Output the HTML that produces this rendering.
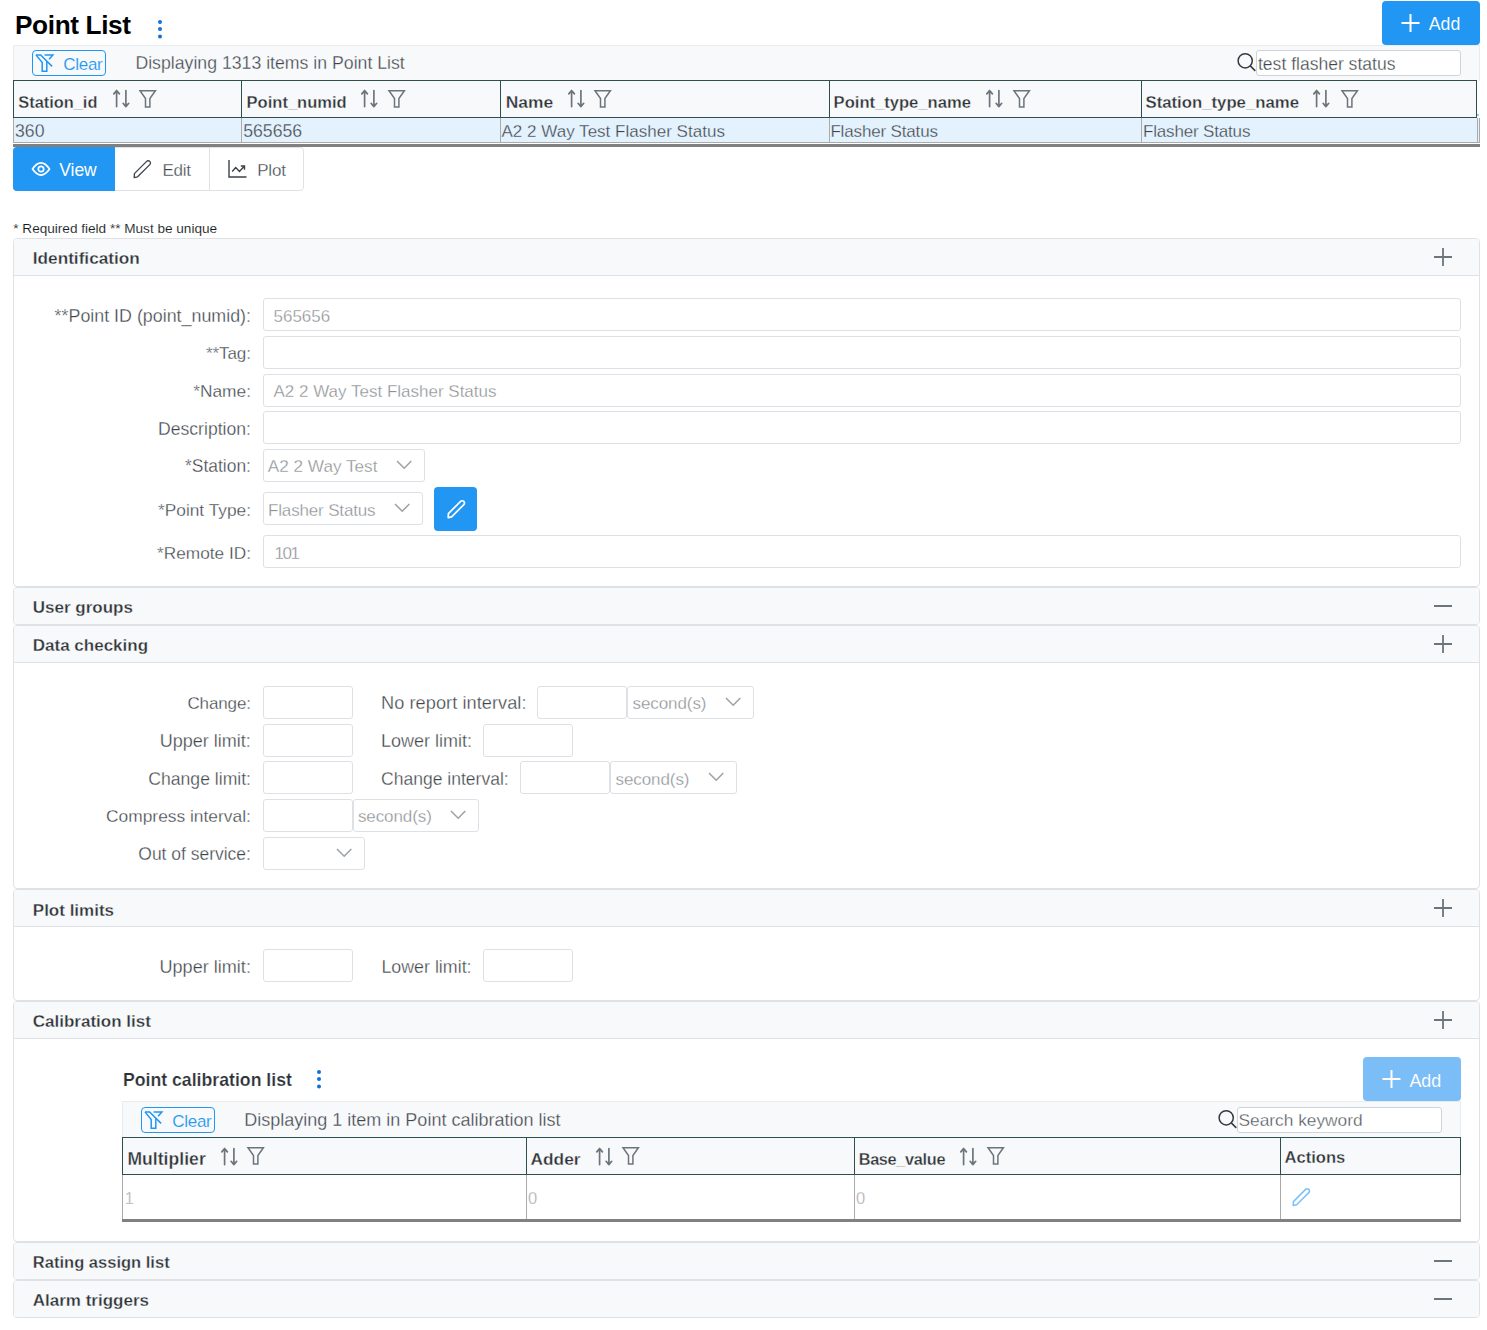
<!DOCTYPE html>
<html><head><meta charset="utf-8">
<style>
*{box-sizing:border-box;}
html,body{margin:0;padding:0;}
body{width:1487px;height:1330px;position:relative;overflow:hidden;background:#fff;font-family:"Liberation Sans",sans-serif;color:#495057;}
.a{position:absolute;}
.t{position:absolute;white-space:pre;line-height:20px;}
svg{position:absolute;overflow:visible;}
</style></head>
<body>
<div class="t" style="left:15.00px;top:15.00px;font-size:26.20px;color:#000;font-weight:bold;letter-spacing:-0.371px;">Point List</div>
<svg style="left:156px;top:18px" width="8" height="22" viewBox="0 0 8 22"><circle cx="4" cy="4" r="2" fill="#1570d6"/><circle cx="4" cy="11" r="2" fill="#1570d6"/><circle cx="4" cy="18.4" r="2" fill="#1570d6"/></svg>
<div class="a" style="left:1382px;top:1px;width:98px;height:44px;background:#2196f3;border-radius:4px;"></div>
<svg style="left:1400px;top:13px" width="20" height="20" viewBox="0 0 20 20"><path d="M10.5 1V19M1.5 10H19.5" stroke="#fff" stroke-width="2"/></svg>
<div class="t" style="left:1428.70px;top:14.00px;font-size:17.76px;color:#fff;-webkit-text-stroke:0.1px #2196f3;">Add</div>
<div class="a" style="left:13px;top:45px;width:1467px;height:36px;background:#f8f9fa;border:1px solid #e9ecef;border-bottom:none;"></div>
<div class="a" style="left:32px;top:50px;width:74px;height:26px;border:1px solid #2196f3;border-radius:4px;"></div>
<svg style="left:33px;top:51px" width="24" height="24" viewBox="0 0 24 24"><g fill="none" stroke="#2196f3" stroke-width="1.5" stroke-linejoin="miter"><path d="M3 3.9H7.6L19.1 15.4"/><path d="M3 3.9L9.2 11.6V20.2H13.8V10.6"/><path d="M11.6 3.9H19.9L16.1 8.3"/></g></svg>
<div class="t" style="left:63.20px;top:54.50px;font-size:17.00px;color:#2196f3;letter-spacing:-0.258px;-webkit-text-stroke:0.15px #f8f9fa;">Clear</div>
<div class="t" style="left:135.40px;top:53.00px;font-size:17.70px;color:#3c4349;-webkit-text-stroke:0.3px #f8f9fa;">Displaying 1313 items in Point List</div>
<svg style="left:1236px;top:52px" width="22" height="22" viewBox="0 0 22 22"><circle cx="9.2" cy="8.8" r="7.1" fill="none" stroke="#343a40" stroke-width="1.5"/><path d="M14.3 13.9L19.3 18.9" stroke="#343a40" stroke-width="1.5"/></svg>
<div class="a" style="left:1256px;top:50px;width:205px;height:26px;background:#fff;border:1px solid #ced4da;border-radius:3px;"></div>
<div class="t" style="left:1258.00px;top:54.00px;font-size:17.54px;color:#3c4349;-webkit-text-stroke:0.3px #fff;">test flasher status</div>
<div class="a" style="left:13px;top:80px;width:1464px;height:38px;background:#f8f9fa;border:1px solid #2f4f4f;"></div>
<div class="a" style="left:241px;top:80px;width:1px;height:38px;background:#2f4f4f;"></div>
<div class="a" style="left:500px;top:80px;width:1px;height:38px;background:#2f4f4f;"></div>
<div class="a" style="left:829px;top:80px;width:1px;height:38px;background:#2f4f4f;"></div>
<div class="a" style="left:1141px;top:80px;width:1px;height:38px;background:#2f4f4f;"></div>
<div class="a" style="left:13px;top:118px;width:1467px;height:25px;background:#e3f2fd;border:1px solid #aaa;border-top:none;"></div>
<div class="a" style="left:1477px;top:114px;width:2px;height:2px;background:#90caf9;"></div>
<div class="a" style="left:241px;top:118px;width:1px;height:25px;background:#aaa;"></div>
<div class="a" style="left:500px;top:118px;width:1px;height:25px;background:#aaa;"></div>
<div class="a" style="left:829px;top:118px;width:1px;height:25px;background:#aaa;"></div>
<div class="a" style="left:1141px;top:118px;width:1px;height:25px;background:#aaa;"></div>
<div class="a" style="left:1477px;top:118px;width:1px;height:25px;background:#aaa;"></div>
<div class="a" style="left:13px;top:144px;width:1467px;height:3px;background:#808080;"></div>
<div class="t" style="left:18.30px;top:92.00px;font-size:16.36px;color:#2d3237;font-weight:bold;-webkit-text-stroke:0.3px #f8f9fa;">Station_id</div>
<svg style="left:112.9px;top:89.3px" width="18" height="20" viewBox="0 0 18 20"><g fill="none" stroke="#6c757d" stroke-width="1.7" stroke-linecap="round" stroke-linejoin="round"><path d="M3.6 1.6V17.6M0.8 4.9L3.6 1.6L6.4 4.9"/><path d="M12.9 1.6V17.6M10.1 14.3L12.9 17.6L15.7 14.3"/></g></svg>
<svg style="left:139.3px;top:89px" width="18" height="20" viewBox="0 0 18 20"><path d="M1 1.8H16.4L10.9 9.6V18.1H6.5V9.6Z" fill="none" stroke="#6c757d" stroke-width="1.5" stroke-linejoin="miter"/></svg>
<div class="t" style="left:246.60px;top:92.50px;font-size:16.55px;color:#2d3237;font-weight:bold;-webkit-text-stroke:0.3px #f8f9fa;">Point_numid</div>
<svg style="left:361.4px;top:89.3px" width="18" height="20" viewBox="0 0 18 20"><g fill="none" stroke="#6c757d" stroke-width="1.7" stroke-linecap="round" stroke-linejoin="round"><path d="M3.6 1.6V17.6M0.8 4.9L3.6 1.6L6.4 4.9"/><path d="M12.9 1.6V17.6M10.1 14.3L12.9 17.6L15.7 14.3"/></g></svg>
<svg style="left:388.1px;top:89px" width="18" height="20" viewBox="0 0 18 20"><path d="M1 1.8H16.4L10.9 9.6V18.1H6.5V9.6Z" fill="none" stroke="#6c757d" stroke-width="1.5" stroke-linejoin="miter"/></svg>
<div class="t" style="left:505.80px;top:92.00px;font-size:17.40px;color:#2d3237;font-weight:bold;-webkit-text-stroke:0.3px #f8f9fa;">Name</div>
<svg style="left:567.7px;top:89.3px" width="18" height="20" viewBox="0 0 18 20"><g fill="none" stroke="#6c757d" stroke-width="1.7" stroke-linecap="round" stroke-linejoin="round"><path d="M3.6 1.6V17.6M0.8 4.9L3.6 1.6L6.4 4.9"/><path d="M12.9 1.6V17.6M10.1 14.3L12.9 17.6L15.7 14.3"/></g></svg>
<svg style="left:594.4px;top:89px" width="18" height="20" viewBox="0 0 18 20"><path d="M1 1.8H16.4L10.9 9.6V18.1H6.5V9.6Z" fill="none" stroke="#6c757d" stroke-width="1.5" stroke-linejoin="miter"/></svg>
<div class="t" style="left:833.60px;top:92.50px;font-size:16.59px;color:#2d3237;font-weight:bold;-webkit-text-stroke:0.3px #f8f9fa;">Point_type_name</div>
<svg style="left:986px;top:89.3px" width="18" height="20" viewBox="0 0 18 20"><g fill="none" stroke="#6c757d" stroke-width="1.7" stroke-linecap="round" stroke-linejoin="round"><path d="M3.6 1.6V17.6M0.8 4.9L3.6 1.6L6.4 4.9"/><path d="M12.9 1.6V17.6M10.1 14.3L12.9 17.6L15.7 14.3"/></g></svg>
<svg style="left:1012.8px;top:89px" width="18" height="20" viewBox="0 0 18 20"><path d="M1 1.8H16.4L10.9 9.6V18.1H6.5V9.6Z" fill="none" stroke="#6c757d" stroke-width="1.5" stroke-linejoin="miter"/></svg>
<div class="t" style="left:1145.50px;top:92.50px;font-size:16.74px;color:#2d3237;font-weight:bold;-webkit-text-stroke:0.3px #f8f9fa;">Station_type_name</div>
<svg style="left:1313.4px;top:89.3px" width="18" height="20" viewBox="0 0 18 20"><g fill="none" stroke="#6c757d" stroke-width="1.7" stroke-linecap="round" stroke-linejoin="round"><path d="M3.6 1.6V17.6M0.8 4.9L3.6 1.6L6.4 4.9"/><path d="M12.9 1.6V17.6M10.1 14.3L12.9 17.6L15.7 14.3"/></g></svg>
<svg style="left:1340.6px;top:89px" width="18" height="20" viewBox="0 0 18 20"><path d="M1 1.8H16.4L10.9 9.6V18.1H6.5V9.6Z" fill="none" stroke="#6c757d" stroke-width="1.5" stroke-linejoin="miter"/></svg>
<div class="t" style="left:15.00px;top:121.00px;font-size:17.70px;color:#3c4349;-webkit-text-stroke:0.3px #e3f2fd;">360</div>
<div class="t" style="left:243.20px;top:121.00px;font-size:17.70px;color:#3c4349;-webkit-text-stroke:0.3px #e3f2fd;">565656</div>
<div class="t" style="left:501.50px;top:121.50px;font-size:17.04px;color:#3c4349;-webkit-text-stroke:0.3px #e3f2fd;">A2 2 Way Test Flasher Status</div>
<div class="t" style="left:830.40px;top:121.50px;font-size:17.00px;color:#3c4349;letter-spacing:-0.154px;-webkit-text-stroke:0.3px #e3f2fd;">Flasher Status</div>
<div class="t" style="left:1143.00px;top:121.50px;font-size:17.00px;color:#3c4349;letter-spacing:-0.169px;-webkit-text-stroke:0.3px #e3f2fd;">Flasher Status</div>
<div class="a" style="left:13px;top:147px;width:291px;height:44px;border:1px solid #dee2e6;border-radius:4px;"></div>
<div class="a" style="left:13px;top:147px;width:102px;height:44px;background:#2196f3;border-radius:4px 0 0 4px;"></div>
<div class="a" style="left:209px;top:147px;width:1px;height:44px;background:#dee2e6;"></div>
<svg style="left:31px;top:161px" width="21" height="16" viewBox="0 0 21 16"><path d="M1.5 8C4.5 3.6 7 1.9 10 1.9S15.5 3.6 18.5 8C15.5 12.4 13 14.1 10 14.1S4.5 12.4 1.5 8Z" fill="none" stroke="#fff" stroke-width="1.7"/><circle cx="10" cy="8" r="2.7" fill="none" stroke="#fff" stroke-width="1.7"/></svg>
<div class="t" style="left:59.20px;top:160.00px;font-size:17.47px;color:#fff;">View</div>
<svg style="left:133px;top:159px" width="20" height="20" viewBox="0 0 20 20"><path d="M1.2 18.6L1.4 14.6L13.6 2.4C14.5 1.5 15.9 1.5 16.8 2.4C17.7 3.3 17.7 4.7 16.8 5.6L4.6 17.8Z" fill="none" stroke="#3c4349" stroke-width="1.3" stroke-linejoin="round"/></svg>
<div class="t" style="left:162.40px;top:160.50px;font-size:17.00px;color:#3c4349;letter-spacing:-0.264px;-webkit-text-stroke:0.3px #fff;">Edit</div>
<svg style="left:227px;top:159px" width="21" height="20" viewBox="0 0 21 20"><path d="M2 1V18H19.5" fill="none" stroke="#3c4349" stroke-width="1.4"/><path d="M5.2 12.5L8.7 8.5L12.5 12.4L17.2 7.2M13.8 7H17.5V10.7" fill="none" stroke="#3c4349" stroke-width="1.4"/></svg>
<div class="t" style="left:257.20px;top:160.50px;font-size:17.00px;color:#3c4349;letter-spacing:-0.164px;-webkit-text-stroke:0.3px #fff;">Plot</div>
<div class="t" style="left:13.30px;top:218.50px;font-size:13.59px;color:#16191c;-webkit-text-stroke:0.1px #fff;">* Required field ** Must be unique</div>
<div class="a" style="left:13px;top:238px;width:1467px;height:349px;border:1px solid #dee2e6;border-radius:4px;background:#fff;"></div>
<div class="a" style="left:14px;top:239px;width:1465px;height:36px;background:#f8f9fa;border-radius:3px 3px 0 0;"></div>
<div class="a" style="left:13px;top:275px;width:1467px;height:1px;background:#dee2e6;"></div>
<div class="t" style="left:32.80px;top:248.00px;font-size:17.21px;color:#2d3237;font-weight:bold;-webkit-text-stroke:0.3px #f8f9fa;">Identification</div>
<svg style="left:1433px;top:247px" width="20" height="20" viewBox="0 0 20 20"><path d="M1 10H19M10 1V19" stroke="#6c757d" stroke-width="1.8"/></svg>
<div class="t" style="left:54.60px;top:306.00px;font-size:17.85px;color:#3c4349;-webkit-text-stroke:0.3px #fff;">**Point ID (point_numid):</div>
<div class="a" style="left:263px;top:298px;width:1198px;height:33px;border:1px solid #dde1e5;border-radius:3px;background:#fff;"></div>
<div class="t" style="left:273.50px;top:306.50px;font-size:17.00px;color:#8c9094;letter-spacing:-0.006px;-webkit-text-stroke:0.3px #fff;">565656</div>
<div class="t" style="left:205.90px;top:343.50px;font-size:17.00px;color:#3c4349;letter-spacing:-0.051px;-webkit-text-stroke:0.3px #fff;">**Tag:</div>
<div class="a" style="left:263px;top:336px;width:1198px;height:33px;border:1px solid #dde1e5;border-radius:3px;background:#fff;"></div>
<div class="t" style="left:193.20px;top:381.00px;font-size:17.34px;color:#3c4349;-webkit-text-stroke:0.3px #fff;">*Name:</div>
<div class="a" style="left:263px;top:374px;width:1198px;height:33px;border:1px solid #dde1e5;border-radius:3px;background:#fff;"></div>
<div class="t" style="left:273.50px;top:381.50px;font-size:17.00px;color:#8c9094;-webkit-text-stroke:0.3px #fff;">A2 2 Way Test Flasher Status</div>
<div class="t" style="left:158.00px;top:419.00px;font-size:17.61px;color:#3c4349;-webkit-text-stroke:0.3px #fff;">Description:</div>
<div class="a" style="left:263px;top:411px;width:1198px;height:33px;border:1px solid #dde1e5;border-radius:3px;background:#fff;"></div>
<div class="t" style="left:185.10px;top:456.00px;font-size:17.43px;color:#3c4349;-webkit-text-stroke:0.3px #fff;">*Station:</div>
<div class="a" style="left:263px;top:449px;width:162px;height:33px;border:1px solid #dde1e5;border-radius:3px;background:#fff;"></div>
<div class="t" style="left:267.80px;top:456.00px;font-size:17.16px;color:#8c9094;-webkit-text-stroke:0.3px #fff;">A2 2 Way Test</div>
<svg style="left:395.5px;top:460.1px" width="17" height="10" viewBox="0 0 17 10"><path d="M1 1L8.2 8.2L15.3 1" fill="none" stroke="#9ba1a6" stroke-width="1.5"/></svg>
<div class="t" style="left:158.00px;top:500.00px;font-size:17.31px;color:#3c4349;-webkit-text-stroke:0.3px #fff;">*Point Type:</div>
<div class="a" style="left:263px;top:492px;width:160px;height:33px;border:1px solid #dde1e5;border-radius:3px;background:#fff;"></div>
<div class="t" style="left:268.00px;top:500.50px;font-size:17.00px;color:#8c9094;letter-spacing:-0.154px;-webkit-text-stroke:0.3px #fff;">Flasher Status</div>
<svg style="left:393.5px;top:503.1px" width="17" height="10" viewBox="0 0 17 10"><path d="M1 1L8.2 8.2L15.3 1" fill="none" stroke="#9ba1a6" stroke-width="1.5"/></svg>
<div class="a" style="left:434px;top:487px;width:43px;height:44px;background:#2196f3;border-radius:4px;"></div>
<svg style="left:446.5px;top:499px" width="20" height="20" viewBox="0 0 20 20"><path d="M1.2 18.6L1.4 14.6L13.6 2.4C14.5 1.5 15.9 1.5 16.8 2.4C17.7 3.3 17.7 4.7 16.8 5.6L4.6 17.8Z" fill="none" stroke="#fff" stroke-width="1.7" stroke-linejoin="round"/></svg>
<div class="t" style="left:157.10px;top:543.00px;font-size:17.24px;color:#3c4349;-webkit-text-stroke:0.3px #fff;">*Remote ID:</div>
<div class="a" style="left:263px;top:535px;width:1198px;height:33px;border:1px solid #dde1e5;border-radius:3px;background:#fff;"></div>
<div class="t" style="left:274.40px;top:543.50px;font-size:17.00px;color:#8c9094;letter-spacing:-1.378px;-webkit-text-stroke:0.3px #fff;">101</div>
<div class="a" style="left:13px;top:587px;width:1467px;height:38px;border:1px solid #dee2e6;border-radius:4px;background:#fff;"></div>
<div class="a" style="left:14px;top:588px;width:1465px;height:36px;background:#f8f9fa;border-radius:3px;"></div>
<div class="t" style="left:32.80px;top:597.50px;font-size:17.00px;color:#2d3237;font-weight:bold;-webkit-text-stroke:0.3px #f8f9fa;">User groups</div>
<svg style="left:1433px;top:596px" width="20" height="20" viewBox="0 0 20 20"><path d="M1 10H19" stroke="#6c757d" stroke-width="2"/></svg>
<div class="a" style="left:13px;top:625px;width:1467px;height:264px;border:1px solid #dee2e6;border-radius:4px;background:#fff;"></div>
<div class="a" style="left:14px;top:626px;width:1465px;height:36px;background:#f8f9fa;border-radius:3px 3px 0 0;"></div>
<div class="a" style="left:13px;top:662px;width:1467px;height:1px;background:#dee2e6;"></div>
<div class="t" style="left:32.80px;top:635.50px;font-size:17.00px;color:#2d3237;font-weight:bold;-webkit-text-stroke:0.3px #f8f9fa;">Data checking</div>
<svg style="left:1433px;top:634px" width="20" height="20" viewBox="0 0 20 20"><path d="M1 10H19M10 1V19" stroke="#6c757d" stroke-width="1.8"/></svg>
<div class="t" style="left:187.40px;top:693.50px;font-size:17.00px;color:#3c4349;letter-spacing:-0.113px;-webkit-text-stroke:0.3px #fff;">Change:</div>
<div class="t" style="left:159.70px;top:731.00px;font-size:18.05px;color:#3c4349;-webkit-text-stroke:0.3px #fff;">Upper limit:</div>
<div class="t" style="left:148.30px;top:769.00px;font-size:17.60px;color:#3c4349;-webkit-text-stroke:0.3px #fff;">Change limit:</div>
<div class="t" style="left:106.00px;top:806.00px;font-size:17.39px;color:#3c4349;-webkit-text-stroke:0.3px #fff;">Compress interval:</div>
<div class="t" style="left:138.30px;top:844.00px;font-size:17.48px;color:#3c4349;-webkit-text-stroke:0.3px #fff;">Out of service:</div>
<div class="a" style="left:263px;top:686px;width:90px;height:33px;border:1px solid #dde1e5;border-radius:3px;background:#fff;"></div>
<div class="a" style="left:263px;top:724px;width:90px;height:33px;border:1px solid #dde1e5;border-radius:3px;background:#fff;"></div>
<div class="a" style="left:263px;top:761px;width:90px;height:33px;border:1px solid #dde1e5;border-radius:3px;background:#fff;"></div>
<div class="a" style="left:263px;top:799px;width:90px;height:33px;border:1px solid #dde1e5;border-radius:3px;background:#fff;"></div>
<div class="a" style="left:263px;top:837px;width:102px;height:33px;border:1px solid #dde1e5;border-radius:3px;background:#fff;"></div>
<svg style="left:335.5px;top:848.1px" width="17" height="10" viewBox="0 0 17 10"><path d="M1 1L8.2 8.2L15.3 1" fill="none" stroke="#9ba1a6" stroke-width="1.5"/></svg>
<div class="a" style="left:353px;top:799px;width:126px;height:33px;border:1px solid #dde1e5;border-radius:3px;background:#fff;"></div>
<div class="t" style="left:357.90px;top:806.50px;font-size:17.00px;color:#8c9094;letter-spacing:-0.081px;-webkit-text-stroke:0.3px #fff;">second(s)</div>
<svg style="left:449.5px;top:810.1px" width="17" height="10" viewBox="0 0 17 10"><path d="M1 1L8.2 8.2L15.3 1" fill="none" stroke="#9ba1a6" stroke-width="1.5"/></svg>
<div class="t" style="left:381.00px;top:693.00px;font-size:18.20px;color:#3c4349;letter-spacing:0.053px;-webkit-text-stroke:0.3px #fff;">No report interval:</div>
<div class="a" style="left:537px;top:686px;width:90px;height:33px;border:1px solid #dde1e5;border-radius:3px;background:#fff;"></div>
<div class="a" style="left:627px;top:686px;width:127px;height:33px;border:1px solid #dde1e5;border-radius:3px;background:#fff;"></div>
<div class="t" style="left:632.50px;top:693.50px;font-size:17.00px;color:#8c9094;letter-spacing:-0.081px;-webkit-text-stroke:0.3px #fff;">second(s)</div>
<svg style="left:724.5px;top:697.1px" width="17" height="10" viewBox="0 0 17 10"><path d="M1 1L8.2 8.2L15.3 1" fill="none" stroke="#9ba1a6" stroke-width="1.5"/></svg>
<div class="t" style="left:381.00px;top:731.00px;font-size:17.99px;color:#3c4349;-webkit-text-stroke:0.3px #fff;">Lower limit:</div>
<div class="a" style="left:483px;top:724px;width:90px;height:33px;border:1px solid #dde1e5;border-radius:3px;background:#fff;"></div>
<div class="t" style="left:381.00px;top:769.00px;font-size:17.55px;color:#3c4349;-webkit-text-stroke:0.3px #fff;">Change interval:</div>
<div class="a" style="left:520px;top:761px;width:90px;height:33px;border:1px solid #dde1e5;border-radius:3px;background:#fff;"></div>
<div class="a" style="left:610px;top:761px;width:127px;height:33px;border:1px solid #dde1e5;border-radius:3px;background:#fff;"></div>
<div class="t" style="left:615.50px;top:769.50px;font-size:17.00px;color:#8c9094;letter-spacing:-0.081px;-webkit-text-stroke:0.3px #fff;">second(s)</div>
<svg style="left:707.5px;top:772.1px" width="17" height="10" viewBox="0 0 17 10"><path d="M1 1L8.2 8.2L15.3 1" fill="none" stroke="#9ba1a6" stroke-width="1.5"/></svg>
<div class="a" style="left:13px;top:889px;width:1467px;height:112px;border:1px solid #dee2e6;border-radius:4px;background:#fff;"></div>
<div class="a" style="left:14px;top:890px;width:1465px;height:36px;background:#f8f9fa;border-radius:3px 3px 0 0;"></div>
<div class="a" style="left:13px;top:926px;width:1467px;height:1px;background:#dee2e6;"></div>
<div class="t" style="left:32.80px;top:900.50px;font-size:17.00px;color:#2d3237;font-weight:bold;-webkit-text-stroke:0.3px #f8f9fa;">Plot limits</div>
<svg style="left:1433px;top:898px" width="20" height="20" viewBox="0 0 20 20"><path d="M1 10H19M10 1V19" stroke="#6c757d" stroke-width="1.8"/></svg>
<div class="t" style="left:159.50px;top:957.00px;font-size:18.09px;color:#3c4349;-webkit-text-stroke:0.3px #fff;">Upper limit:</div>
<div class="a" style="left:263px;top:949px;width:90px;height:33px;border:1px solid #dde1e5;border-radius:3px;background:#fff;"></div>
<div class="t" style="left:381.40px;top:957.00px;font-size:17.84px;color:#3c4349;-webkit-text-stroke:0.3px #fff;">Lower limit:</div>
<div class="a" style="left:483px;top:949px;width:90px;height:33px;border:1px solid #dde1e5;border-radius:3px;background:#fff;"></div>
<div class="a" style="left:13px;top:1001px;width:1467px;height:241px;border:1px solid #dee2e6;border-radius:4px;background:#fff;"></div>
<div class="a" style="left:14px;top:1002px;width:1465px;height:36px;background:#f8f9fa;border-radius:3px 3px 0 0;"></div>
<div class="a" style="left:13px;top:1038px;width:1467px;height:1px;background:#dee2e6;"></div>
<div class="t" style="left:32.80px;top:1011.50px;font-size:17.00px;color:#2d3237;font-weight:bold;-webkit-text-stroke:0.3px #f8f9fa;">Calibration list</div>
<svg style="left:1433px;top:1010px" width="20" height="20" viewBox="0 0 20 20"><path d="M1 10H19M10 1V19" stroke="#6c757d" stroke-width="1.8"/></svg>
<div class="t" style="left:122.90px;top:1070.00px;font-size:17.69px;color:#2d3237;font-weight:bold;-webkit-text-stroke:0.2px #fff;">Point calibration list</div>
<svg style="left:315px;top:1068px" width="8" height="22" viewBox="0 0 8 22"><circle cx="4" cy="4" r="2" fill="#1570d6"/><circle cx="4" cy="11" r="2" fill="#1570d6"/><circle cx="4" cy="18.4" r="2" fill="#1570d6"/></svg>
<div class="a" style="left:1363px;top:1057px;width:98px;height:44px;background:#7bbdf7;border-radius:4px;"></div>
<svg style="left:1381px;top:1069px" width="20" height="20" viewBox="0 0 20 20"><path d="M10.5 1V19M1.5 10H19.5" stroke="#fff" stroke-width="2"/></svg>
<div class="t" style="left:1409.40px;top:1071.00px;font-size:17.93px;color:#fff;-webkit-text-stroke:0.1px #7bbdf7;">Add</div>
<div class="a" style="left:122px;top:1101px;width:1339px;height:36px;background:#f8f9fa;border:1px solid #e9ecef;border-bottom:none;"></div>
<div class="a" style="left:141px;top:1107px;width:74px;height:26px;border:1px solid #2196f3;border-radius:4px;"></div>
<svg style="left:142px;top:1108px" width="24" height="24" viewBox="0 0 24 24"><g fill="none" stroke="#2196f3" stroke-width="1.5" stroke-linejoin="miter"><path d="M3 3.9H7.6L19.1 15.4"/><path d="M3 3.9L9.2 11.6V20.2H13.8V10.6"/><path d="M11.6 3.9H19.9L16.1 8.3"/></g></svg>
<div class="t" style="left:172.20px;top:1111.50px;font-size:17.00px;color:#2196f3;letter-spacing:-0.257px;-webkit-text-stroke:0.15px #f8f9fa;">Clear</div>
<div class="t" style="left:244.30px;top:1110.00px;font-size:18.01px;color:#3c4349;-webkit-text-stroke:0.3px #f8f9fa;">Displaying 1 item in Point calibration list</div>
<svg style="left:1217px;top:1109px" width="22" height="22" viewBox="0 0 22 22"><circle cx="9.2" cy="8.8" r="7.1" fill="none" stroke="#343a40" stroke-width="1.5"/><path d="M14.3 13.9L19.3 18.9" stroke="#343a40" stroke-width="1.5"/></svg>
<div class="a" style="left:1237px;top:1107px;width:205px;height:26px;background:#fff;border:1px solid #ced4da;border-radius:3px;"></div>
<div class="t" style="left:1238.50px;top:1110.00px;font-size:17.32px;color:#50565c;-webkit-text-stroke:0.3px #fff;">Search keyword</div>
<div class="a" style="left:122px;top:1137px;width:1339px;height:38px;background:#f8f9fa;border:1px solid #2f4f4f;"></div>
<div class="a" style="left:526px;top:1137px;width:1px;height:38px;background:#2f4f4f;"></div>
<div class="a" style="left:854px;top:1137px;width:1px;height:38px;background:#2f4f4f;"></div>
<div class="a" style="left:1280px;top:1137px;width:1px;height:38px;background:#2f4f4f;"></div>
<div class="a" style="left:122px;top:1175px;width:1339px;height:44px;background:#fff;border-left:1px solid #aaa;border-right:1px solid #aaa;"></div>
<div class="a" style="left:526px;top:1175px;width:1px;height:44px;background:#aaa;"></div>
<div class="a" style="left:854px;top:1175px;width:1px;height:44px;background:#aaa;"></div>
<div class="a" style="left:1280px;top:1175px;width:1px;height:44px;background:#aaa;"></div>
<div class="a" style="left:122px;top:1219px;width:1339px;height:3px;background:#808080;"></div>
<div class="t" style="left:127.40px;top:1149.00px;font-size:17.50px;color:#2d3237;font-weight:bold;letter-spacing:0.059px;-webkit-text-stroke:0.3px #f8f9fa;">Multiplier</div>
<svg style="left:220.7px;top:1146.8px" width="18" height="20" viewBox="0 0 18 20"><g fill="none" stroke="#6c757d" stroke-width="1.7" stroke-linecap="round" stroke-linejoin="round"><path d="M3.6 1.6V17.6M0.8 4.9L3.6 1.6L6.4 4.9"/><path d="M12.9 1.6V17.6M10.1 14.3L12.9 17.6L15.7 14.3"/></g></svg>
<svg style="left:247.10000000000002px;top:1146px" width="18" height="20" viewBox="0 0 18 20"><path d="M1 1.8H16.4L10.9 9.6V18.1H6.5V9.6Z" fill="none" stroke="#6c757d" stroke-width="1.5" stroke-linejoin="miter"/></svg>
<div class="t" style="left:530.60px;top:1149.00px;font-size:17.27px;color:#2d3237;font-weight:bold;-webkit-text-stroke:0.3px #f8f9fa;">Adder</div>
<svg style="left:595.6px;top:1146.8px" width="18" height="20" viewBox="0 0 18 20"><g fill="none" stroke="#6c757d" stroke-width="1.7" stroke-linecap="round" stroke-linejoin="round"><path d="M3.6 1.6V17.6M0.8 4.9L3.6 1.6L6.4 4.9"/><path d="M12.9 1.6V17.6M10.1 14.3L12.9 17.6L15.7 14.3"/></g></svg>
<svg style="left:622.1999999999999px;top:1146px" width="18" height="20" viewBox="0 0 18 20"><path d="M1 1.8H16.4L10.9 9.6V18.1H6.5V9.6Z" fill="none" stroke="#6c757d" stroke-width="1.5" stroke-linejoin="miter"/></svg>
<div class="t" style="left:858.70px;top:1149.00px;font-size:16.30px;color:#2d3237;font-weight:bold;letter-spacing:-0.313px;-webkit-text-stroke:0.3px #f8f9fa;">Base_value</div>
<svg style="left:960.3px;top:1146.8px" width="18" height="20" viewBox="0 0 18 20"><g fill="none" stroke="#6c757d" stroke-width="1.7" stroke-linecap="round" stroke-linejoin="round"><path d="M3.6 1.6V17.6M0.8 4.9L3.6 1.6L6.4 4.9"/><path d="M12.9 1.6V17.6M10.1 14.3L12.9 17.6L15.7 14.3"/></g></svg>
<svg style="left:987.0px;top:1146px" width="18" height="20" viewBox="0 0 18 20"><path d="M1 1.8H16.4L10.9 9.6V18.1H6.5V9.6Z" fill="none" stroke="#6c757d" stroke-width="1.5" stroke-linejoin="miter"/></svg>
<div class="t" style="left:1284.50px;top:1147.50px;font-size:16.58px;color:#2d3237;font-weight:bold;-webkit-text-stroke:0.3px #f8f9fa;">Actions</div>
<div class="t" style="left:124.80px;top:1188.00px;font-size:16.50px;color:#aaa;-webkit-text-stroke:0.3px #fff;">1</div>
<div class="t" style="left:528.00px;top:1188.00px;font-size:16.50px;color:#aaa;-webkit-text-stroke:0.3px #fff;">0</div>
<div class="t" style="left:856.00px;top:1188.00px;font-size:16.50px;color:#aaa;-webkit-text-stroke:0.3px #fff;">0</div>
<svg style="left:1292px;top:1187px" width="20" height="20" viewBox="0 0 20 20"><path d="M1.2 18.6L1.4 14.6L13.6 2.4C14.5 1.5 15.9 1.5 16.8 2.4C17.7 3.3 17.7 4.7 16.8 5.6L4.6 17.8Z" fill="none" stroke="#7cc0f7" stroke-width="1.5" stroke-linejoin="round"/></svg>
<div class="a" style="left:13px;top:1242px;width:1467px;height:38px;border:1px solid #dee2e6;border-radius:4px;background:#fff;"></div>
<div class="a" style="left:14px;top:1243px;width:1465px;height:36px;background:#f8f9fa;border-radius:3px;"></div>
<div class="t" style="left:32.80px;top:1252.50px;font-size:16.55px;color:#2d3237;font-weight:bold;-webkit-text-stroke:0.3px #f8f9fa;">Rating assign list</div>
<svg style="left:1433px;top:1251px" width="20" height="20" viewBox="0 0 20 20"><path d="M1 10H19" stroke="#6c757d" stroke-width="2"/></svg>
<div class="a" style="left:13px;top:1280px;width:1467px;height:38px;border:1px solid #dee2e6;border-radius:4px;background:#fff;"></div>
<div class="a" style="left:14px;top:1281px;width:1465px;height:36px;background:#f8f9fa;border-radius:3px;"></div>
<div class="t" style="left:32.80px;top:1290.50px;font-size:17.00px;color:#2d3237;font-weight:bold;-webkit-text-stroke:0.3px #f8f9fa;">Alarm triggers</div>
<svg style="left:1433px;top:1289px" width="20" height="20" viewBox="0 0 20 20"><path d="M1 10H19" stroke="#6c757d" stroke-width="2"/></svg>
</body></html>
